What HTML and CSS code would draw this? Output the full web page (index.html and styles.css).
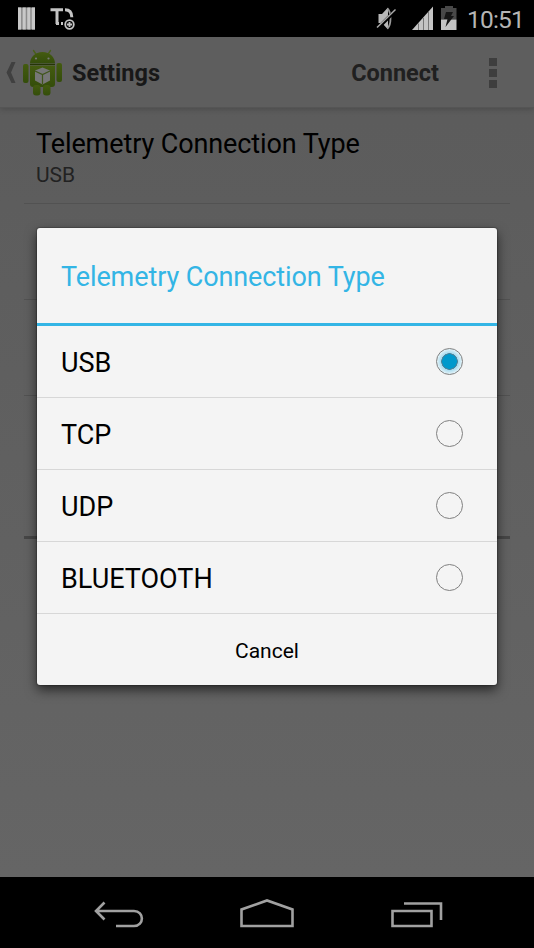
FILE: index.html
```html
<!DOCTYPE html>
<html lang="en">
<head>
<meta charset="utf-8">
<title>Settings</title>
<link rel="stylesheet" href="styles.css">
</head>
<body>
<div class="screen">
  <header class="status">
    <svg class="status-left" width="80" height="37" viewBox="0 0 80 37">
      <path fill="#a8a8a8" d="M18 7.500h17v22h-17z"/>
      <path stroke="#c8c8c8" stroke-width="3" d="M19.500 7.500v22M24.300 7.500v22M28.900 7.500v22M33.500 7.500v22"/>
      <path stroke="#777" stroke-width=".7" d="M21.800 8v21M26.300 8v21M30.900 8v21"/>
      <g fill="none" stroke="#c4c4c4"><path stroke-width="3" d="M50.500 9.700H63M57 9v15M65 9.700c5 0 6.800 3 6.800 7.500M56 23.500h3M61 23.500h2"/><circle cx="69.500" cy="24.500" r="4.300" stroke-width="1.800" fill="#000"/><path stroke-width="1.800" d="M69.500 21.900v5.200M66.900 24.500h5.200"/></g>
    </svg>
    <svg class="status-right" width="84" height="37" viewBox="374 0 84 37">
      <path fill="#b8b8b8" d="M378.500 14h3.500l6-6.500v22l-6-6.500h-3.500z"/>
      <path fill="none" stroke="#999" stroke-width="1.800" d="M387.500 8.500c4 4 4 16 0 20"/>
      <path stroke="#000" stroke-width="3.500" d="M378 28l17-17"/>
      <path stroke="#aaa" stroke-width="1.500" d="M377 27.500l18.500-18"/>
      <path fill="#c4c4c4" d="M412 30l21-23.500V30z"/>
      <path stroke="#777" d="M418.500 23.500v6.500M423.500 18v12M428.500 12v18"/>
      <path fill="#484848" d="M445 6h8v2h3.500v11.500h-15.500V8h4z"/>
      <path fill="#c4c4c4" d="M441 19.500h15.500V30H441z"/>
      <path fill="#161616" d="M446 12h7l-2 4h3l-8.500 11 2-8h-3.500z"/>
    </svg>
    <time class="clock">10:51</time>
  </header>
  <nav class="actionbar">
    <svg width="66" height="71" viewBox="0 37 66 71">
      <defs><linearGradient id="g" x2="0" y2="1"><stop stop-color="#445b10"/><stop offset="1" stop-color="#344d0b"/></linearGradient></defs>
      <path d="M15.500 62h-4L6.500 72.500l5 10.500h4L11 72.500z" fill="#404040"/>
      <path d="M36.500 55l-3-4.500M47.500 55l3-4.500" stroke="#49601b" stroke-width="1.400" stroke-linecap="round"/>
      <g fill="url(#g)">
        <path d="M30 63.500c0-6 5-11.500 12.500-11.500S55 57.500 55 63.500z"/>
        <path d="M30 65.500h25V84q0 3-3 3H33q-3 0-3-3z"/>
        <rect x="23" y="64" width="5.500" height="19" rx="2"/><rect x="56.500" y="63" width="5.500" height="19" rx="2"/>
        <rect x="33" y="85" width="7.500" height="10.500" rx="3"/><rect x="43" y="85" width="7.500" height="10.500" rx="3"/>
      </g>
      <path d="M30 64.500h25" stroke="#253507" stroke-width="1"/>
      <circle cx="36" cy="58.500" r="1.100" fill="#777"/><circle cx="48.500" cy="58.500" r="1.100" fill="#777"/>
      <path d="M42.500 67.500l7.500 3v10l-7.500 4-7.500-4v-10z" fill="#777"/>
      <path d="M35 71l7.500 3.500L50 71M42.500 74.500v9.500" fill="none" stroke="#40551b" stroke-width="1.200"/>
    </svg>
    <h1 class="bar-title">Settings</h1>
    <span class="connect">Connect</span>
    <span class="overflow"><i></i><i></i><i></i></span>
  </nav>
  <main class="content">
    <section class="pref"><div class="pref-title">Telemetry Connection Type</div><div class="pref-value">USB</div></section>
    <section class="pref"></section>
    <section class="pref"></section>
    <section class="pref category"></section>
  </main>
  <footer class="navbar">
    <svg width="534" height="71" viewBox="0 877 534 71" fill="none" stroke="#a1a1a1" stroke-width="2.600">
      <path d="M104.500 902.500l-8.500 8.500 8.500 8.500M96 911h38c10.500 0 10.500 15 0 15h-18"/>
      <path d="M241.500 926v-16.500l25.500-9 25.500 9V926z"/>
      <path d="M392.500 911h39v15h-39zM404 903.500h37V920"/>
    </svg>
  </footer>
  <div class="dialog" role="dialog">
    <h2 class="dialog-title">Telemetry Connection Type</h2>
    <div class="option"><span>USB</span><i class="radio checked"></i></div>
    <div class="option"><span>TCP</span><i class="radio"></i></div>
    <div class="option"><span>UDP</span><i class="radio"></i></div>
    <div class="option"><span>BLUETOOTH</span><i class="radio"></i></div>
    <div class="cancel">Cancel</div>
  </div>
</div>
</body>
</html>
```
FILE: styles.css
```css
* { box-sizing: border-box; }
body { margin: 0; font-family: Roboto, sans-serif; }
.screen {
  position: relative;
  width: 534px;
  height: 948px;
  overflow: hidden;
  display: flex;
  flex-direction: column;
  background: linear-gradient(#5b5b5b 37px, #656565 877px);
}
.status { height: 37px; background: #000; display: flex; align-items: center; }
.status-right { margin-left: auto; }
.clock { width: 76px; padding-left: 9px; color: #b5b5b5; font-size: 24.500px; line-height: 37px; padding-top: 1px; letter-spacing: -.8px; }
.actionbar {
  height: 71px;
  display: flex;
  align-items: center;
  background: #5e5e5e;
  border-bottom: 1px solid #555;
  box-shadow: 0 2px 5px rgba(0, 0, 0, .16);
}
.bar-title, .connect { margin: 0; font-size: 23.500px; font-weight: 700; line-height: 30px; color: #181818; padding-top: 2px; }
.bar-title { padding-left: 6px; }
.connect { margin-left: auto; color: #202020; }
.overflow { width: 95px; padding: 1px 0 0 50px; display: flex; flex-direction: column; gap: 3px; }
.overflow i { width: 8px; height: 8px; background: #3e3e3e; }
.content { flex: 1; padding: 0 24px; }
.pref { height: 96px; padding: 18px 12px 0; border-bottom: 1px solid #525252; }
.pref + .pref { height: 96px; }
.pref.category { height: 143px; border-bottom: 3px solid #464646; }
.pref-title { font-size: 27px; line-height: 36px; color: #000; white-space: nowrap; letter-spacing: -.1px; }
.pref-value { font-size: 21px; line-height: 27px; color: #222; }
.navbar { height: 71px; background: #000; }
.dialog {
  position: absolute;
  left: 37px;
  top: 228px;
  width: 460px;
  height: 457px;
  background: #f4f4f4;
  border-radius: 3px;
  box-shadow: 0 0 1px 1px rgba(0, 0, 0, .2), 0 5px 12px rgba(0, 0, 0, .6);
}
.dialog-title {
  margin: 0;
  height: 98px;
  padding-left: 24px;
  border-bottom: 3px solid #33b5e5;
  font-size: 27px;
  font-weight: 400;
  line-height: 98px;
  letter-spacing: -.1px;
  color: #33b5e5;
}
.option {
  height: 72px;
  padding: 0 34px 0 24px;
  border-bottom: 1px solid #d7d7d7;
  display: flex;
  justify-content: space-between;
  align-items: center;
  font-size: 27px;
  color: #000;
}
.option span { padding-top: 2px; }
.radio { width: 27px; height: 27px; border: 1.500px solid #808080; border-radius: 50%; }
.checked { background: radial-gradient(circle, #0099cc 0 7px, #4c8299 7.500px 8px, #a9dcef 8.500px, #ddf0f7 12px); }
.cancel { height: 71px; line-height: 74px; text-align: center; font-size: 21px; color: #000; }
```
